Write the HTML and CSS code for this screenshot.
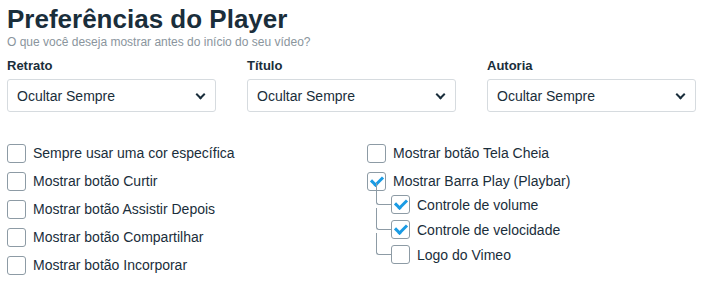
FILE: index.html
```html
<!DOCTYPE html>
<html lang="pt-BR">
<head>
  <meta charset="UTF-8">
  <title>Preferências do Player</title>
  <link rel="stylesheet" href="styles.css">
</head>
<body>
  <div class="prefs">
    <h1>Preferências do Player</h1>
    <p class="subtitle">O que você deseja mostrar antes do início do seu vídeo?</p>

    <div class="selects">
      <div class="field">
        <label>Retrato</label>
        <div class="select">Ocultar Sempre <span class="chevron"></span></div>
      </div>
      <div class="field">
        <label>Título</label>
        <div class="select">Ocultar Sempre <span class="chevron"></span></div>
      </div>
      <div class="field">
        <label>Autoria</label>
        <div class="select">Ocultar Sempre <span class="chevron"></span></div>
      </div>
    </div>

    <div class="options">
      <ul class="col">
        <li class="opt"><span class="box"></span>Sempre usar uma cor específica</li>
        <li class="opt"><span class="box"></span>Mostrar botão Curtir</li>
        <li class="opt"><span class="box"></span>Mostrar botão Assistir Depois</li>
        <li class="opt"><span class="box"></span>Mostrar botão Compartilhar</li>
        <li class="opt"><span class="box"></span>Mostrar botão Incorporar</li>
      </ul>
      <ul class="col">
        <li class="opt"><span class="box"></span>Mostrar botão Tela Cheia</li>
        <li class="opt parent"><span class="box checked"></span>Mostrar Barra Play (Playbar)</li>
        <li>
          <ul class="children">
            <li class="opt child"><span class="box checked"></span>Controle de volume</li>
            <li class="opt child"><span class="box checked"></span>Controle de velocidade</li>
            <li class="opt child"><span class="box"></span>Logo do Vimeo</li>
          </ul>
        </li>
      </ul>
    </div>
  </div>
</body>
</html>
```

FILE: styles.css
```css
body {
  margin: 0;
  padding: 4px 7px;
  font-family: "Liberation Sans", Arial, sans-serif;
  color: #1a2e3b;
  background: #fff;
}

h1 {
  margin: 0;
  font-size: 26px;
  line-height: 30px;
  font-weight: bold;
}

.subtitle {
  margin: 0;
  font-size: 12px;
  line-height: 16px;
  color: #8a959d;
}

.selects {
  display: grid;
  grid-template-columns: 240px 240px 240px;
  margin-top: 8px;
}

.field label {
  display: block;
  font-size: 13px;
  font-weight: bold;
  line-height: 16px;
  margin-bottom: 5px;
}

.select {
  box-sizing: border-box;
  width: 209px;
  height: 33px;
  border: 1px solid #d6dbdf;
  border-radius: 3px;
  padding: 0 11px 0 9px;
  display: flex;
  align-items: center;
  justify-content: space-between;
  font-size: 14px;
}

.chevron {
  width: 5px;
  height: 5px;
  border-right: 2.5px solid #1a2e3b;
  border-bottom: 2.5px solid #1a2e3b;
  transform: rotate(45deg);
  margin-top: -3px;
}

.options {
  display: grid;
  grid-template-columns: 360px 1fr;
  margin-top: 27px;
}

ul {
  list-style: none;
  margin: 0;
  padding: 0;
}

.opt {
  display: flex;
  align-items: center;
  height: 28px;
  font-size: 14px;
}

.box {
  box-sizing: border-box;
  width: 19px;
  height: 19px;
  border: 1px solid #8d9ba5;
  border-radius: 3px;
  margin-right: 7px;
  background: #fff;
  position: relative;
}

.box.checked::after {
  content: "";
  position: absolute;
  left: 5px;
  top: 1px;
  width: 5px;
  height: 9px;
  border-right: 3px solid #1a9be4;
  border-bottom: 3px solid #1a9be4;
  transform: rotate(45deg);
}

.children {
  margin-left: 9px;
  margin-top: -3px;
}

.child {
  height: 25px;
  padding-left: 15px;
  position: relative;
}

.child::before {
  content: "";
  position: absolute;
  left: 0;
  top: -9px;
  width: 15px;
  height: 21px;
  border-left: 1px solid #8d9ba5;
  border-bottom: 1px solid #8d9ba5;
  border-bottom-left-radius: 3px;
}
```
